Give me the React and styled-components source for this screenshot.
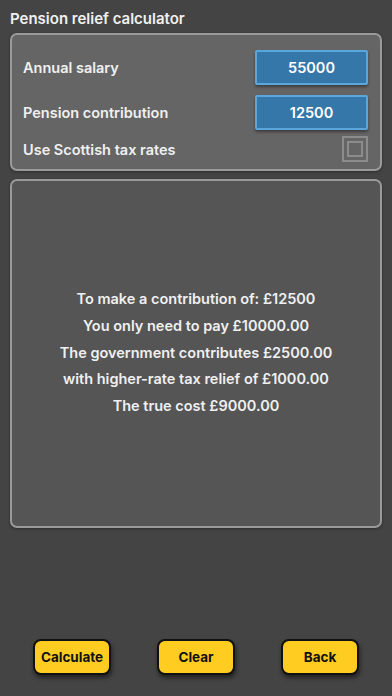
import React, { useState } from 'react'
import styled, { createGlobalStyle } from 'styled-components'

const Global = createGlobalStyle`
  html, body { margin: 0; padding: 0; background: #444444; }
  body { font-family: Inter, "Open Sans", "Liberation Sans", sans-serif; }
`;

const Screen = styled.div`
  width: 392px;
  height: 696px;
  box-sizing: border-box;
  padding: 10px 10px 21px;
  display: flex;
  flex-direction: column;
  background: #444444;
  color: #f0f0f0;
`;

const Title = styled.div`
  font-size: 15px;
  font-weight: 600;
  line-height: 18px;
  margin-bottom: 5px;
`;

const Panel = styled.div`
  box-sizing: border-box;
  background: ${p => p.shade};
  border: 2px solid #9a9a9a;
  border-radius: 7px;
  box-shadow: 0 1px 3px rgba(0, 0, 0, 0.35);
`;

const InputPanel = styled(Panel)`
  height: 138px;
  padding: 15px 12px 0 11px;
  display: flex;
  flex-direction: column;
`;

const Row = styled.div`
  display: flex;
  align-items: center;
  justify-content: space-between;
  height: ${p => p.h || 35}px;
  margin-bottom: ${p => p.gap || 0}px;
`;

const Label = styled.div`
  font-size: 14.5px;
  font-weight: 600;
`;

const Field = styled.div`
  box-sizing: border-box;
  width: 113px;
  height: 35px;
  background: #3677aa;
  border: 2px solid #5aa7de;
  border-radius: 2px;
  display: flex;
  align-items: center;
  justify-content: center;
  font-size: 14.5px;
  font-weight: 600;
  color: #fff;
  box-shadow: 0 2px 3px rgba(0, 0, 0, 0.4);
`;

const Check = styled.div`
  box-sizing: border-box;
  width: 26px;
  height: 26px;
  border: 2px solid #8c8c8c;
  padding: 3px;
  & > div {
    width: 100%;
    height: 100%;
    box-sizing: border-box;
    border: 2px solid #8c8c8c;
  }
`;

const ResultPanel = styled(Panel)`
  margin-top: 8px;
  height: 349px;
  display: flex;
  flex-direction: column;
  align-items: center;
  justify-content: center;
  padding-bottom: 1px;
`;

const Line = styled.div`
  font-size: 14.5px;
  font-weight: 600;
  line-height: 26.8px;
  text-align: center;
`;

const Spacer = styled.div`
  flex: 1;
`;

const Buttons = styled.div`
  display: flex;
  justify-content: space-between;
  padding: 0 23px;
`;

const Button = styled.button`
  box-sizing: border-box;
  width: 78px;
  height: 36px;
  background: #ffcc22;
  border: 2px solid #111;
  border-radius: 8px;
  font-family: inherit;
  font-size: 13.5px;
  font-weight: 700;
  color: #111;
  box-shadow: 1px 3px 4px rgba(0, 0, 0, 0.5);
  padding: 0;
`;

export default function App() {
  const [scottish, setScottish] = useState(false)
  return (
    <>
      <Global />
      <Screen>
        <Title>Pension relief calculator</Title>
        <InputPanel shade="#656565">
          <Row gap={10}>
            <Label>Annual salary</Label>
            <Field>55000</Field>
          </Row>
          <Row gap={3}>
            <Label>Pension contribution</Label>
            <Field>12500</Field>
          </Row>
          <Row h={32}>
            <Label>Use Scottish tax rates</Label>
            <Check onClick={() => setScottish(!scottish)}><div /></Check>
          </Row>
        </InputPanel>
        <ResultPanel shade="#555555">
          <Line>To make a contribution of: £12500</Line>
          <Line>You only need to pay £10000.00</Line>
          <Line>The government contributes £2500.00</Line>
          <Line>with higher-rate tax relief of £1000.00</Line>
          <Line>The true cost £9000.00</Line>
        </ResultPanel>
        <Spacer />
        <Buttons>
          <Button>Calculate</Button>
          <Button>Clear</Button>
          <Button>Back</Button>
        </Buttons>
      </Screen>
    </>
  )
}
